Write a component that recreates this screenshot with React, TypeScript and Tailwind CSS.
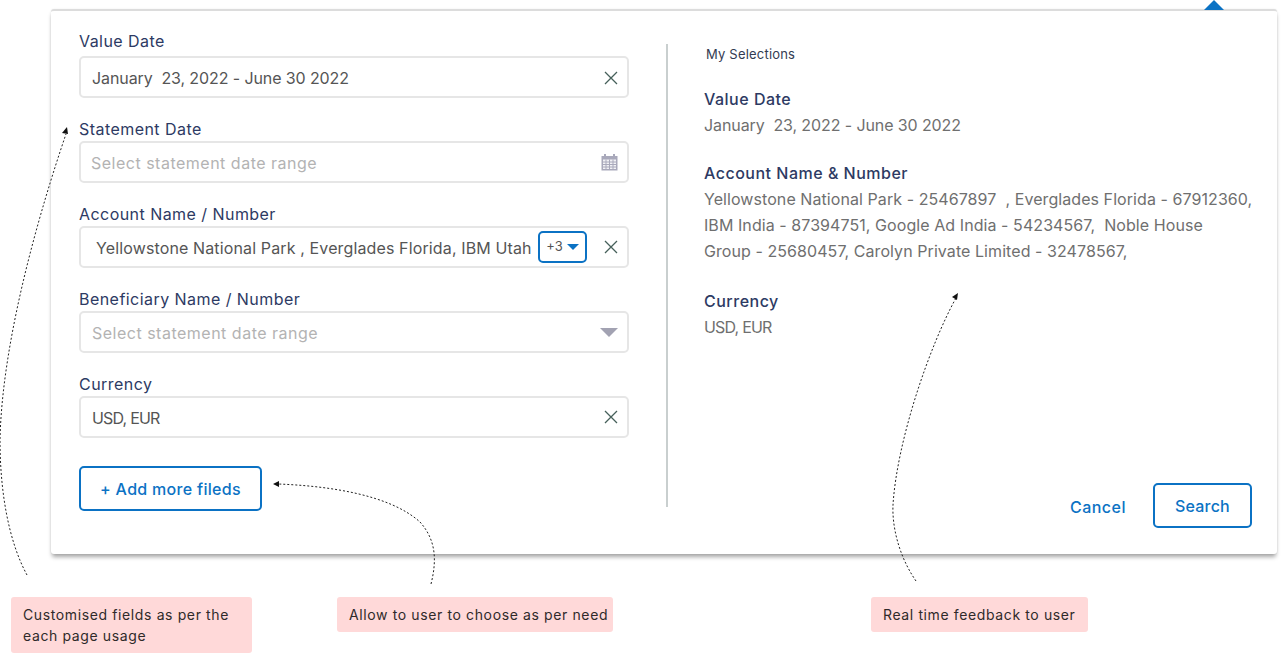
import React from 'react';

const FONT = "font-['Inter','Liberation_Sans',sans-serif]";

function CloseIcon() {
  return (
    <svg width="14" height="14" viewBox="0 0 14 14" className="shrink-0">
      <path d="M1 1 L13 13 M13 1 L1 13" stroke="#46605a" strokeWidth="1.3" fill="none" />
    </svg>
  );
}

function CalendarIcon() {
  return (
    <svg width="17" height="18" viewBox="0 0 17 18" className="shrink-0">
      <path d="M0.5 3 H3 V1 H5 V3 H12 V1 H14 V3 H16.5 V17.5 H0.5 Z" fill="#a9a9bb" />
      <rect x="2" y="6.5" width="13" height="9.5" fill="#f1f1f5" />
      <path d="M2 9 H15 M2 11.5 H15 M2 14 H15 M5 6.5 V16 M8.5 6.5 V16 M12 6.5 V16" stroke="#a9a9bb" strokeWidth="1" />
    </svg>
  );
}

function Field({ label, first, children }: { label: string; first?: boolean; children: React.ReactNode }) {
  return (
    <div className="flex flex-col">
      <div className={`h-[20px] leading-[20px] text-[16px] tracking-[0.45px] text-[#2d3a63] ${first ? 'mb-[5px]' : 'mb-[2px]'}`}>{label}</div>
      <div className="flex h-[42px] w-[550px] items-center rounded-[5px] border-2 border-[#e6e6e6] bg-white">{children}</div>
    </div>
  );
}

function Selection({ title, className, children }: { title: string; className?: string; children: React.ReactNode }) {
  return (
    <div className={`flex flex-col ${className ?? ''}`}>
      <div className="h-[26px] text-[16px] font-medium leading-[26px] tracking-[0.5px] text-[#2d3a63]">{title}</div>
      <div className="text-[16px] leading-[26px] text-[#6f6f6f]">{children}</div>
    </div>
  );
}

function Arrows() {
  return (
    <svg width="1281" height="653" viewBox="0 0 1281 653" className="pointer-events-none absolute left-0 top-0">
      <g fill="none" stroke="#222" strokeWidth="1" strokeDasharray="2 2">
        <path d="M27 575 C8 540 0 490 0 440 C2 340 40 210 66 134" />
        <path d="M431 584 C437 560 436 540 420 522 C390 495 330 486 278 484" />
        <path d="M916 581 C898 555 892 525 893 505 C897 440 930 345 956 298" />
      </g>
      <path d="M67 127 L62 133 L68 134 Z" fill="#111" />
      <path d="M273 484 L279 481 L279 487 Z" fill="#111" />
      <path d="M958 293 L952 297 L957 300 Z" fill="#111" />
    </svg>
  );
}

function Note({ className, children }: { className: string; children: React.ReactNode }) {
  return (
    <div className={`rounded-[3px] bg-[#ffd9d9] pl-[12px] pt-[7px] text-[14px] leading-[21px] tracking-[0.62px] text-[#2f2a2a] ${className}`}>
      {children}
    </div>
  );
}

export default function App() {
  return (
    <div className={`relative h-[653px] w-[1281px] overflow-hidden bg-white ${FONT}`}>
      <div className="relative ml-[51px] mt-[9px] flex h-[545px] w-[1226px] rounded-[3px] border-t-2 border-[#dcdcdc] bg-white pl-[28px] shadow-[0_4px_4px_-1px_rgba(0,0,0,0.35),0_0_2px_rgba(0,0,0,0.08)]">
        {/* caret on top of the panel */}
        <div className="absolute left-[1153px] top-[-11px] h-0 w-0 border-x-[10px] border-b-[10px] border-x-transparent border-b-[#0b72c4]"></div>

        <div className="flex w-[587px] shrink-0 flex-col pt-[20px]">
          <div className="flex flex-col gap-[21px]">
            <Field label="Value Date" first>
              <span className="flex-1 whitespace-pre pl-[11px] pt-[2px] text-[16px] tracking-[-0.1px] text-[#555]">January  23, 2022 - June 30 2022</span>
              <div className="mr-[9px] mt-[2px]"><CloseIcon /></div>
            </Field>
            <Field label="Statement Date">
              <span className="flex-1 pl-[10px] pt-[2px] text-[16px] tracking-[0.5px] text-[#b3b3b3]">Select statement date range</span>
              <div className="mr-[9px]"><CalendarIcon /></div>
            </Field>
            <Field label="Account Name / Number">
              <span className="flex-1 whitespace-nowrap pl-[15px] pt-[2px] text-[16px] tracking-[0.13px] text-[#555]">Yellowstone National Park , Everglades Florida, IBM Utah</span>
              <div className="mr-[17px] flex h-[32px] w-[49px] items-center justify-center gap-[4px] rounded-[5px] border-2 border-[#0b72c4] text-[13px] text-[#555]">
                +3
                <span className="h-0 w-0 border-x-[6px] border-t-[6px] border-x-transparent border-t-[#0b72c4]"></span>
              </div>
              <div className="mr-[9px]"><CloseIcon /></div>
            </Field>
            <Field label="Beneficiary Name / Number">
              <span className="flex-1 pl-[11px] pt-[2px] text-[16px] tracking-[0.5px] text-[#b3b3b3]">Select statement date range</span>
              <span className="mr-[9px] h-0 w-0 border-x-[9px] border-t-[9px] border-x-transparent border-t-[#a2a2b2]"></span>
            </Field>
            <Field label="Currency">
              <span className="flex-1 pl-[11px] pt-[2px] text-[16px] tracking-[-0.8px] text-[#555]">USD, EUR</span>
              <div className="mr-[9px]"><CloseIcon /></div>
            </Field>
          </div>
          <div className="mt-[28px] flex h-[45px] w-[183px] items-center justify-center rounded-[5px] border-2 border-[#0b72c4] text-[16px] font-medium tracking-[0.3px] text-[#0b72c4]">
            + Add more fileds
          </div>
        </div>

        <div className="mt-[33px] h-[463px] w-[2px] shrink-0 bg-[#c9cfcf]"></div>

        <div className="flex min-w-0 flex-1 flex-col pl-[36px] pr-[25px]">
          <div className="ml-[2px] mt-[33px] text-[13px] leading-[20px] tracking-[0.2px] text-[#333b52]">My Selections</div>
          <div className="mt-[22px] flex flex-col">
            <Selection title="Value Date"><span className="whitespace-pre tracking-[-0.1px]">January  23, 2022 - June 30 2022</span></Selection>
            <Selection title="Account Name &amp; Number" className="mt-[22px]">
              <span className="whitespace-pre tracking-[0.07px]">Yellowstone National Park - 25467897  , Everglades Florida - 67912360,<br />IBM India - 87394751, Google Ad India - 54234567,  Noble House<br />Group - 25680457, Carolyn Private Limited - 32478567,</span>
            </Selection>
            <Selection title="Currency" className="mt-[24px]"><span className="tracking-[-0.8px]">USD, EUR</span></Selection>
          </div>
          <div className="mt-auto mb-[26px] flex items-center justify-end">
            <span className="mr-[27px] mt-[2px] text-[16px] font-medium tracking-[0.5px] text-[#0b72c4]">Cancel</span>
            <div className="flex h-[45px] w-[99px] items-center justify-center rounded-[5px] border-2 border-[#0b72c4] text-[16px] font-medium tracking-[0.2px] text-[#0b72c4]">Search</div>
          </div>
        </div>
      </div>

      <div className="mt-[43px] flex items-start">
        <Note className="ml-[11px] h-[56px] w-[241px]">Customised fields as per the<br />each page usage</Note>
        <Note className="ml-[85px] h-[35px] w-[276px]">Allow to user to choose as per need</Note>
        <Note className="ml-[258px] h-[35px] w-[217px]">Real time feedback to user</Note>
      </div>

      <Arrows />
    </div>
  );
}
